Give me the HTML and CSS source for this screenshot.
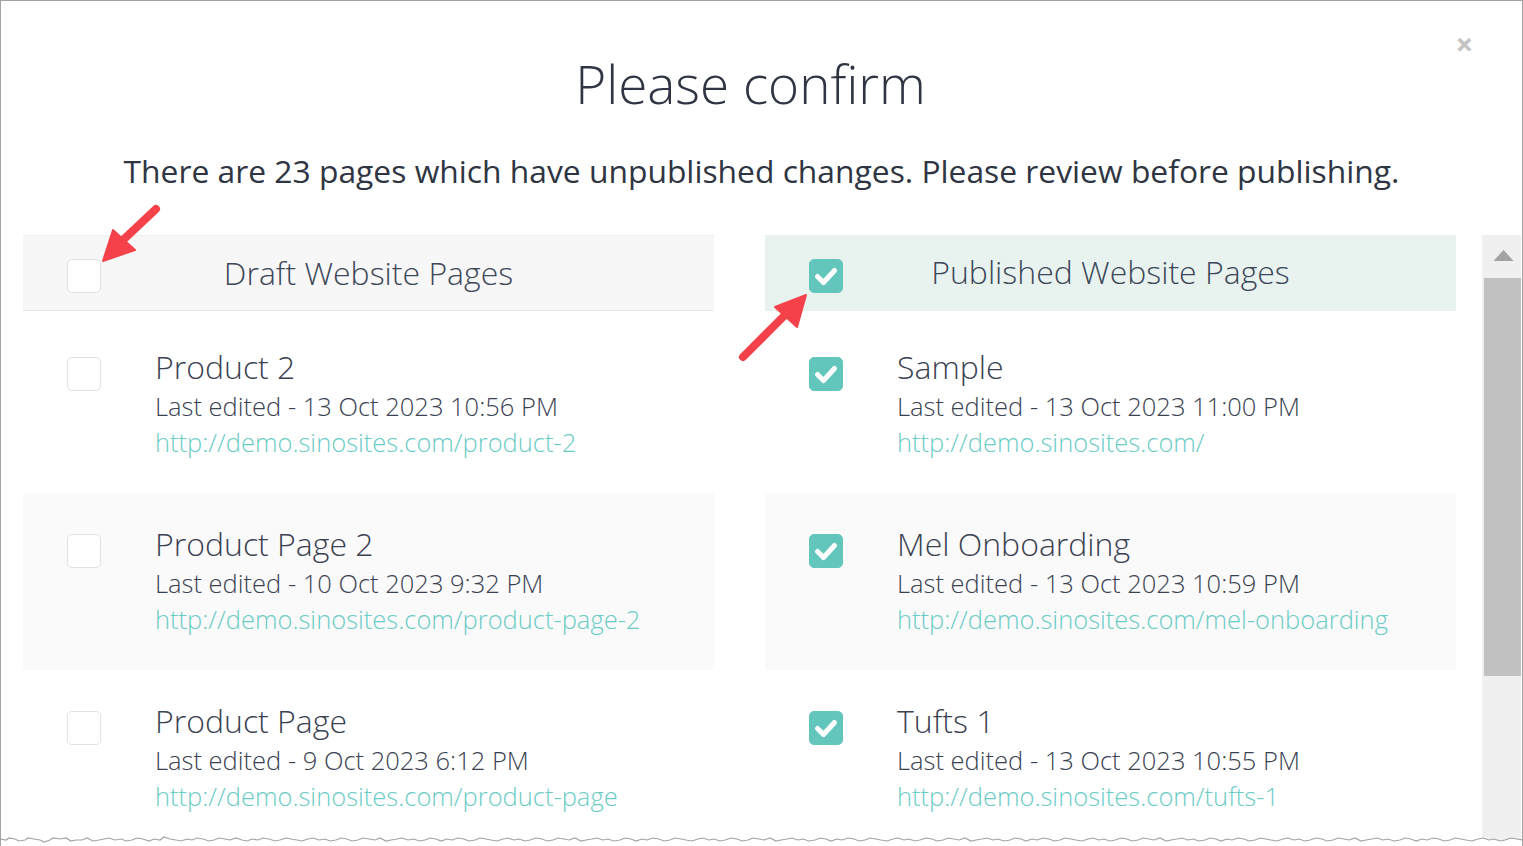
FILE: index.html
```html
<!DOCTYPE html>
<html lang="en">
<head>
<meta charset="utf-8">
<title>Please confirm</title>
<link rel="stylesheet" href="styles.css">
</head>
<body>
<div class="frame">
  <span class="close">&#x2715;</span>
  <h1 class="title">Please confirm</h1>
  <p class="subtitle">There are 23 pages which have unpublished changes. Please review before publishing.</p>
  <div class="body">
    <div class="columns">
      <section class="col">
        <div class="col-head draft">
          <span class="cb"></span>
          <span class="col-title">Draft Website Pages</span>
        </div>
        <div class="row">
          <span class="cb"></span>
          <div class="info">
            <div class="name">Product 2</div>
            <div class="meta">Last edited - 13 Oct 2023 10:56 PM</div>
            <a class="link">http://demo.sinosites.com/product-2</a>
          </div>
        </div>
        <div class="row alt">
          <span class="cb"></span>
          <div class="info">
            <div class="name">Product Page 2</div>
            <div class="meta">Last edited - 10 Oct 2023 9:32 PM</div>
            <a class="link">http://demo.sinosites.com/product-page-2</a>
          </div>
        </div>
        <div class="row">
          <span class="cb"></span>
          <div class="info">
            <div class="name">Product Page</div>
            <div class="meta">Last edited - 9 Oct 2023 6:12 PM</div>
            <a class="link">http://demo.sinosites.com/product-page</a>
          </div>
        </div>
      </section>
      <section class="col">
        <div class="col-head published">
          <span class="cb checked"><svg viewBox="0 0 34 34"><polyline points="8.5,17.5 14.5,23.5 25.5,11.5"/></svg></span>
          <span class="col-title">Published Website Pages</span>
        </div>
        <div class="row">
          <span class="cb checked"><svg viewBox="0 0 34 34"><polyline points="8.5,17.5 14.5,23.5 25.5,11.5"/></svg></span>
          <div class="info">
            <div class="name">Sample</div>
            <div class="meta">Last edited - 13 Oct 2023 11:00 PM</div>
            <a class="link">http://demo.sinosites.com/</a>
          </div>
        </div>
        <div class="row alt">
          <span class="cb checked"><svg viewBox="0 0 34 34"><polyline points="8.5,17.5 14.5,23.5 25.5,11.5"/></svg></span>
          <div class="info">
            <div class="name">Mel Onboarding</div>
            <div class="meta">Last edited - 13 Oct 2023 10:59 PM</div>
            <a class="link">http://demo.sinosites.com/mel-onboarding</a>
          </div>
        </div>
        <div class="row">
          <span class="cb checked"><svg viewBox="0 0 34 34"><polyline points="8.5,17.5 14.5,23.5 25.5,11.5"/></svg></span>
          <div class="info">
            <div class="name">Tufts 1</div>
            <div class="meta">Last edited - 13 Oct 2023 10:55 PM</div>
            <a class="link">http://demo.sinosites.com/tufts-1</a>
          </div>
        </div>
      </section>
    </div>
    <div class="scrollbar">
      <div class="sb-up"><svg viewBox="0 0 22 12"><polygon points="11,0 22,12 0,12"/></svg></div>
      <div class="sb-thumb"></div>
    </div>
  </div>

  <svg class="arrows" viewBox="0 0 1523 846" width="1523" height="846">
    <g fill="#f5424a" stroke="#f5424a" stroke-linecap="round" stroke-linejoin="round">
      <line x1="156" y1="209" x2="122" y2="241" stroke-width="8"/>
      <polygon points="103,261 113,230 135,250" stroke-width="2"/>
      <line x1="743" y1="357" x2="784" y2="316" stroke-width="8"/>
      <polygon points="806,295 775,307 797,327" stroke-width="2"/>
    </g>
  </svg>

  <svg class="torn" viewBox="0 0 1523 14" width="1523" height="14" preserveAspectRatio="none">
    <path class="torn-fill" d="M0,14 L0,5 L6,6 L9,4 L15,5 L19,7 L25,6 L28,4 L34,5 L40,6 L44,8 L50,6 L53,4 L60,5 L66,4 L71,7 L76,6 L82,6 L87,4 L93,7 L99,6 L104,5 L109,4 L115,6 L121,5 L126,7 L132,6 L137,4 L143,5 L149,7 L154,5 L160,6 L164,3 L170,5 L176,6 L181,7 L187,5 L192,6 L197,4 L203,5 L209,7 L214,6 L219,4 L225,5 L230,6 L236,4 L242,6 L247,7 L252,5 L258,6 L263,4 L269,5 L275,7 L280,6 L286,4 L291,5 L297,6 L302,7 L308,5 L313,4 L319,6 L325,5 L330,7 L336,6 L341,4 L347,5 L352,7 L358,6 L363,4 L369,5 L375,6 L380,4 L386,7 L391,6 L397,5 L402,4 L408,6 L414,5 L419,7 L425,6 L430,4 L436,5 L441,7 L447,5 L452,6 L458,4 L464,5 L469,7 L475,6 L480,4 L486,5 L491,6 L497,7 L503,5 L508,4 L514,6 L519,5 L525,7 L530,6 L536,4 L542,5 L547,7 L553,6 L558,4 L564,5 L569,6 L575,4 L581,7 L586,6 L592,5 L597,4 L603,6 L608,5 L614,7 L620,6 L625,4 L631,5 L636,7 L642,5 L647,6 L653,4 L659,5 L664,7 L670,6 L675,4 L681,5 L686,6 L692,7 L698,5 L703,4 L709,6 L714,5 L720,7 L725,6 L731,4 L737,5 L742,7 L748,6 L753,4 L759,5 L764,6 L770,4 L776,7 L781,6 L787,5 L792,4 L798,6 L803,5 L809,7 L815,6 L820,4 L826,5 L831,7 L837,5 L842,6 L848,4 L854,5 L859,7 L865,6 L870,4 L876,5 L881,6 L887,7 L893,5 L898,4 L904,6 L909,5 L915,7 L920,6 L926,4 L932,5 L937,7 L943,6 L948,4 L954,5 L959,6 L965,4 L971,7 L976,6 L982,5 L987,4 L993,6 L998,5 L1004,7 L1010,6 L1015,4 L1021,5 L1026,7 L1032,5 L1037,6 L1043,4 L1049,5 L1054,7 L1060,6 L1065,4 L1071,5 L1076,6 L1082,7 L1088,5 L1093,4 L1099,6 L1104,5 L1110,7 L1115,6 L1121,4 L1127,5 L1132,7 L1138,6 L1143,4 L1149,5 L1154,6 L1160,4 L1166,7 L1171,6 L1177,5 L1182,4 L1188,6 L1193,5 L1199,7 L1205,6 L1210,4 L1216,5 L1221,7 L1227,5 L1232,6 L1238,4 L1244,5 L1249,7 L1255,6 L1260,4 L1266,5 L1271,6 L1277,7 L1283,5 L1288,4 L1294,6 L1299,5 L1305,7 L1310,6 L1316,4 L1322,5 L1327,7 L1333,6 L1338,4 L1344,5 L1349,6 L1355,4 L1361,7 L1366,6 L1372,5 L1377,4 L1383,6 L1388,5 L1394,7 L1400,6 L1405,4 L1411,5 L1416,7 L1422,5 L1427,6 L1433,4 L1439,5 L1444,7 L1450,6 L1455,4 L1461,5 L1466,6 L1472,7 L1478,5 L1483,4 L1489,6 L1494,5 L1500,7 L1505,6 L1511,4 L1517,5 L1523,6 L1523,14 Z"/>
  </svg>
</div>
</body>
</html>
```

FILE: styles.css
```css
* { box-sizing: border-box; }

html, body {
  margin: 0;
  padding: 0;
  background: #ffffff;
}

body {
  font-family: "Open Sans", "Noto Sans", sans-serif;
  color: #3a4250;
}

.frame {
  position: relative;
  width: 1523px;
  height: 846px;
  border: 1px solid #a3a3a3;
  border-bottom: none;
  overflow: hidden;
  background: #ffffff;
}

.close {
  position: absolute;
  top: 30px;
  right: 49px;
  font-size: 20px;
  font-weight: 700;
  color: #c4c4c4;
  line-height: 28px;
  -webkit-text-stroke: 0.6px #c4c4c4;
}

.title {
  margin: 51px 0 0;
  padding-right: 22px;
  text-align: center;
  font-size: 53px;
  line-height: 64px;
  font-weight: 300;
  color: #2f3542;
}

.subtitle {
  margin: 35px 0 0;
  text-align: center;
  font-size: 31.8px;
  line-height: 40px;
  font-weight: 400;
  color: #2f3542;
}

.body {
  display: flex;
  margin-top: 44px;
  height: 620px;
}

.columns {
  display: flex;
  gap: 51px;
  padding-left: 22px;
  width: 1481px;
}

.col {
  width: 691px;
  display: flex;
  flex-direction: column;
}

.col-head {
  position: relative;
  height: 76px;
  display: flex;
  align-items: center;
  padding-left: 44px;
  padding-top: 6px;
  margin-bottom: 5px;
}

.col-head.draft {
  background: #f7f7f7;
  border-top: 1px solid #eeeeee;
  border-bottom: 1px solid #e8e8e8;
}

.col-head.published {
  background: #e8f3f0;
}

.col-title {
  position: absolute;
  left: 0;
  right: 0;
  top: 16px;
  text-align: center;
  font-size: 32px;
  line-height: 42px;
  font-weight: 300;
  color: #3d4758;
}

.cb {
  flex: none;
  position: relative;
  width: 34px;
  height: 34px;
  border: 1px solid #dfe1e4;
  border-radius: 5px;
  background: #ffffff;
  display: block;
}

.cb.checked {
  background: #62c6bd;
  border-color: #62c6bd;
}

.cb svg {
  position: absolute;
  left: -1px;
  top: -1px;
  width: 34px;
  height: 34px;
}

.cb svg polyline {
  fill: none;
  stroke: #ffffff;
  stroke-width: 5;
  stroke-linecap: round;
  stroke-linejoin: round;
}

.row {
  height: 177px;
  display: flex;
  align-items: flex-start;
  padding-left: 44px;
  padding-top: 41px;
}

.row.alt {
  background: #fafafa;
}

.info {
  margin-left: 54px;
  margin-top: -11px;
  display: flex;
  flex-direction: column;
}

.name {
  font-size: 32px;
  line-height: 42px;
  font-weight: 300;
  color: #3a4252;
}

.meta {
  font-size: 25.5px;
  line-height: 36px;
  font-weight: 300;
  color: #3a4252;
}

.link {
  font-size: 25.5px;
  line-height: 36px;
  font-weight: 300;
  color: #6bccc6;
  text-decoration: none;
}

.scrollbar {
  width: 39px;
  background: #f0f0f0;
  display: flex;
  flex-direction: column;
}

.sb-up {
  height: 43px;
  display: flex;
  align-items: center;
  justify-content: center;
  padding-bottom: 2px;
  padding-left: 3px;
}

.sb-up svg {
  width: 21px;
  height: 11px;
  fill: #a3a3a3;
}

.sb-thumb {
  margin-left: 2px;
  height: 398px;
  background: #c1c1c1;
}

.arrows {
  position: absolute;
  left: -1px;
  top: -1px;
  pointer-events: none;
}

.torn {
  position: absolute;
  left: -1px;
  bottom: -2px;
  pointer-events: none;
}

.torn-fill {
  fill: #ffffff;
  stroke: #a3a3a3;
  stroke-width: 1.2;
}
```
